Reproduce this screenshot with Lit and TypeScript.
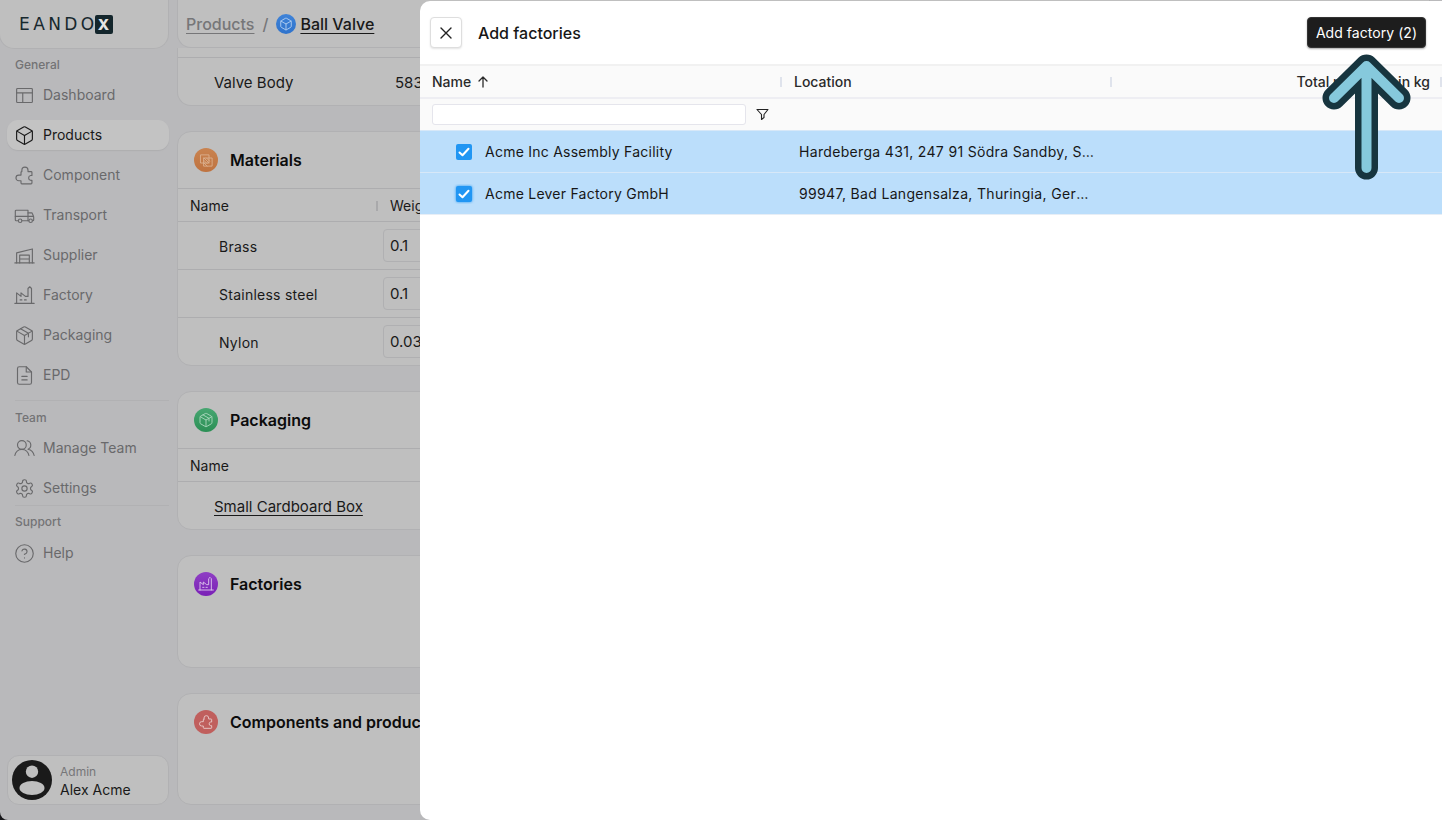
import { LitElement, css, html, svg } from 'lit';
import { customElement } from 'lit/decorators.js';

const box = svg`<path d="M21 8a2 2 0 0 0-1-1.73l-7-4a2 2 0 0 0-2 0l-7 4A2 2 0 0 0 3 8v8a2 2 0 0 0 1 1.73l7 4a2 2 0 0 0 2 0l7-4A2 2 0 0 0 21 16Z"/><path d="m3.3 7 8.7 5 8.7-5"/><path d="M12 22V12"/>`;
const puzzle = svg`<path d="M9 7.5V6a3.5 3.5 0 1 1 7 0v1.5h3.5a1 1 0 0 1 1 1V12H19a2.8 2.8 0 0 0 0 5.5h1.5v3a1 1 0 0 1-1 1H9a1 1 0 0 1-1-1V18H5.5a3.2 3.2 0 0 1 0-6.5H8v-3a1 1 0 0 1 1-1Z"/>`;
const factory = svg`<path d="M1 21h22"/><path d="M3 21V9l5 4V9l5 4h3V4l2-2 2 2v17"/><path d="M7 17h2M12 17h2"/>`;
const packaging = svg`${box}<path d="m7.5 4.3 9 5.2v4"/>`;

const icons = {
  dashboard: svg`<rect x="3" y="4" width="18" height="16" rx="1"/><path d="M3 9h18M10 9v11"/>`,
  box,
  puzzle,
  truck: svg`<path d="M5 18H2.5a1 1 0 0 1-1-1V7a1 1 0 0 1 1-1H16v12H9"/><path d="M16 9h4a1 1 0 0 1 1 .7l1.5 4V17a1 1 0 0 1-1 1H21"/><path d="M16 18h1M1.5 13H22"/><circle cx="7" cy="18" r="2"/><circle cx="19" cy="18" r="2"/>`,
  supplier: svg`<path d="M1 20.5h22"/><path d="M3 20.5V9L21 4.5v16"/><path d="M6.5 20.5v-9h11v9M6.5 16h11"/>`,
  factory,
  packaging,
  file: svg`<path d="M14 2H6a2 2 0 0 0-2 2v16a2 2 0 0 0 2 2h12a2 2 0 0 0 2-2V8Z"/><path d="M14 2v6h6"/><path d="M9 13h6M9 17h6"/>`,
  users: svg`<circle cx="9" cy="8" r="5"/><path d="M1 20c.6-4 3.8-7 8-7s7.4 3 8 7"/><path d="M15 3.2a5 5 0 0 1 1 9.6c3.6.7 6.3 3.5 7 7.2"/>`,
  gear: svg`<path d="M12.22 2h-.44a2 2 0 0 0-2 2v.18a2 2 0 0 1-1 1.73l-.43.25a2 2 0 0 1-2 0l-.15-.08a2 2 0 0 0-2.73.73l-.22.38a2 2 0 0 0 .73 2.73l.15.1a2 2 0 0 1 1 1.72v.51a2 2 0 0 1-1 1.74l-.15.09a2 2 0 0 0-.73 2.73l.22.38a2 2 0 0 0 2.73.73l.15-.08a2 2 0 0 1 2 0l.43.25a2 2 0 0 1 1 1.73V20a2 2 0 0 0 2 2h.44a2 2 0 0 0 2-2v-.18a2 2 0 0 1 1-1.73l.43-.25a2 2 0 0 1 2 0l.15.08a2 2 0 0 0 2.73-.73l.22-.39a2 2 0 0 0-.73-2.73l-.15-.08a2 2 0 0 1-1-1.74v-.5a2 2 0 0 1 1-1.74l.15-.09a2 2 0 0 0 .73-2.73l-.22-.38a2 2 0 0 0-2.73-.73l-.15.08a2 2 0 0 1-2 0l-.43-.25a2 2 0 0 1-1-1.73V4a2 2 0 0 0-2-2z"/><circle cx="12" cy="12" r="3"/>`,
  help: svg`<circle cx="12" cy="12" r="10"/><path d="M9.09 9a3 3 0 0 1 5.83 1c0 2-3 3-3 3"/><path d="M12 17h.01"/>`,
  hatch: svg`<rect x="3" y="3" width="13" height="13"/><rect x="8" y="8" width="13" height="13"/><path d="m8 8 8 8M8 12l5 5M12 8l5 5M13 21l-5-5"/>`,
};

type IconName = keyof typeof icons;

const icon = (name: IconName, size = 21, width = 1.3) => html`<svg
  width=${size}
  height=${size}
  viewBox="0 0 24 24"
  fill="none"
  stroke="currentColor"
  stroke-width=${width}
  stroke-linecap="round"
  stroke-linejoin="round"
>
  ${icons[name]}
</svg>`;

const general: [IconName, string][] = [
  ['dashboard', 'Dashboard'],
  ['box', 'Products'],
  ['puzzle', 'Component'],
  ['truck', 'Transport'],
  ['supplier', 'Supplier'],
  ['factory', 'Factory'],
  ['packaging', 'Packaging'],
  ['file', 'EPD'],
];

const materials = [
  ['Brass', '0.1'],
  ['Stainless steel', '0.1'],
  ['Nylon', '0.03'],
];

const factories = [
  ['Acme Inc Assembly Facility', 'Hardeberga 431, 247 91 Södra Sandby, Sweden'],
  ['Acme Lever Factory GmbH', '99947, Bad Langensalza, Thuringia, Germany'],
];

@customElement('app-root')
export class AppRoot extends LitElement {
  static styles = css`
    :host {
      background: #17171a;
      display: block;
      font: 400 14px/20px 'Inter', 'Liberation Sans', sans-serif;
      height: 820px;
      overflow: hidden;
      position: relative;
      width: 1442px;
      --line: #adadaf;
      --card-line: #b1b1b3;
      --muted: #69696b;
      --ink: #191919;
    }

    * {
      box-sizing: border-box;
    }

    .page {
      background: #b9b9bb;
      border-radius: 0 0 8px 8px;
      display: grid;
      grid-template-columns: 177px 1fr;
      height: 820px;
      overflow: hidden;
    }

    .sidebar {
      display: flex;
      flex-direction: column;
      height: 820px;
      padding-bottom: 15px;
    }

    .logo {
      align-items: center;
      background: #bfbfbf;
      border: 1px solid var(--card-line);
      border-radius: 0 0 15px 15px;
      border-top: 0;
      color: #17282e;
      display: flex;
      flex: none;
      font: 400 17px/20px 'DejaVu Sans', sans-serif;
      height: 49px;
      letter-spacing: 3.4px;
      margin: 0 8px 7px -1px;
      padding-left: 19px;
    }

    .logo b {
      background: #14262c;
      border-radius: 2px;
      color: #e4e4e4;
      font: 800 15px/19px 'Inter', sans-serif;
      height: 19px;
      letter-spacing: 0;
      margin-left: -3px;
      text-align: center;
      width: 18px;
    }

    .label {
      color: #737375;
      flex: none;
      font-size: 12px;
      font-weight: 500;
      height: 16px;
      line-height: 18px;
      margin-left: 15px;
    }

    nav {
      display: flex;
      flex: none;
      flex-direction: column;
      gap: 10px;
      margin: 8px 8px 0 7px;
    }

    nav.help {
      margin-top: 9px;
    }

    nav a {
      align-items: center;
      border-radius: 11px;
      color: var(--muted);
      display: flex;
      gap: 8px;
      height: 30px;
      padding-left: 7px;
    }

    nav a svg {
      flex: none;
    }

    nav a.active {
      background: #c3c3c3;
      box-shadow: 0 1px 1px #aeaeb0;
      color: var(--ink);
    }

    hr {
      border: 0;
      border-top: 1px solid var(--card-line);
      flex: none;
      margin: 0 8px 0 15px;
    }

    .user {
      align-items: center;
      background: #bfbfbf;
      border: 1px solid var(--card-line);
      border-radius: 12px;
      display: flex;
      flex: none;
      gap: 8px;
      height: 50px;
      margin: auto 8px 0 7px;
      padding-left: 4px;
    }

    .user div {
      display: flex;
      flex-direction: column;
      padding-top: 3px;
    }

    .user small {
      color: #767678;
      font-size: 12px;
      line-height: 16px;
    }

    .user span {
      color: var(--ink);
      line-height: 19px;
    }

    .content {
      display: flex;
      flex-direction: column;
      gap: 25px;
      height: 820px;
      overflow: hidden;
      padding-right: 12px;
    }

    .card {
      background: #bfbfbf;
      border: 1px solid var(--card-line);
      border-radius: 14px;
      color: var(--ink);
      flex: none;
    }

    .crumbs {
      align-items: center;
      border-radius: 0 0 14px 14px;
      border-top: 0;
      display: flex;
      font-size: 16px;
      font-weight: 500;
      height: 48px;
      padding-left: 8px;
    }

    .crumbs u {
      text-underline-offset: 3px;
    }

    .crumbs .parent {
      color: #767678;
    }

    .crumbs i {
      color: #767678;
      font-style: normal;
      margin: 0 8px;
    }

    .crumbs .dot {
      align-items: center;
      background: linear-gradient(#3f83d8, #2f73cc);
      border-radius: 50%;
      color: #b9d3f2;
      display: flex;
      height: 20px;
      justify-content: center;
      margin-right: 4px;
      width: 20px;
    }

    .stack {
      display: flex;
      flex: none;
      flex-direction: column;
    }

    .stub {
      border-radius: 0 0 14px 14px;
      border-top: 0;
      height: 58px;
      padding-top: 9px;
    }

    .stub .row {
      border-top: 1px solid var(--line);
      font-size: 15px;
      height: 48px;
      padding-top: 3px;
    }

    .stub .row span:first-child {
      margin-left: 36px;
      width: 181px;
    }

    .head {
      align-items: center;
      color: #0c0c0c;
      display: flex;
      font-size: 16px;
      font-weight: 600;
      gap: 12px;
      height: 56px;
      padding-left: 16px;
      white-space: nowrap;
    }

    .disc {
      align-items: center;
      border-radius: 50%;
      color: #dbdbdb;
      display: flex;
      flex: none;
      height: 24px;
      justify-content: center;
      width: 24px;
    }

    .orange {
      background: linear-gradient(#c98350, #bf7340);
      color: #dcb190;
    }

    .green {
      background: linear-gradient(#47a671, #2b8f55);
      color: #a9d6bb;
    }

    .purple {
      background: linear-gradient(#8f3fc4, #7a20b6);
      color: #dcc5ec;
    }

    .red {
      background: #c05f5d;
      color: #e7c9c8;
    }

    .th {
      align-items: center;
      border-top: 1px solid var(--line);
      display: flex;
      height: 33px;
      padding: 1px 0 0 12px;
    }

    .th span:first-child {
      border-right: 2px solid #a9a9ab;
      line-height: 10px;
      margin-right: 12px;
      width: 188px;
    }

    .th.single span:first-child {
      border: 0;
    }

    .row {
      align-items: center;
      border-top: 1px solid var(--line);
      display: flex;
      height: 48px;
      padding-top: 2px;
    }

    .row .name {
      letter-spacing: 0.25px;
      margin-left: 41px;
      width: 164px;
    }

    .value {
      background: #bfbfbf;
      border: 1px solid #b0b0b2;
      border-radius: 4px;
      font-size: 15px;
      height: 33px;
      line-height: 31px;
      margin-top: -2px;
      padding-left: 6px;
      width: 120px;
    }

    .plain {
      padding-top: 3px;
    }

    .plain span {
      font-size: 15px;
      margin-left: 36px;
      text-decoration: underline;
      text-underline-offset: 3px;
    }

    .modal {
      background: #fff;
      border-radius: 10px 0 0 10px;
      bottom: 0;
      color: #171717;
      left: 420px;
      position: absolute;
      right: 0;
      top: 1px;
    }

    .bar {
      align-items: center;
      display: flex;
      height: 63px;
      padding: 0 16px 0 10px;
    }

    .bar h2 {
      font-size: 16px;
      font-weight: 500;
      margin: 0 auto 0 16px;
    }

    .close {
      align-items: center;
      background: #fff;
      border: 1px solid #dedede;
      border-radius: 4px;
      box-shadow: 0 1px 2px #0000001c;
      color: #222;
      display: flex;
      height: 31px;
      justify-content: center;
      padding: 0;
      width: 32px;
    }

    .primary {
      background: #1d1d1d;
      border: 1px solid #333;
      border-radius: 4px;
      box-shadow: 0 1px 2px #00000055;
      color: #fff;
      font: 400 14px/20px 'Inter', sans-serif;
      height: 31px;
      letter-spacing: 0.05px;
      padding: 0;
      width: 119px;
    }

    .cols {
      display: grid;
      grid-template-columns: 362px 330px 1fr;
    }

    .titles {
      background: #fafafa;
      border-bottom: 2px solid #eeeef3;
      border-top: 2px solid #f1f1f1;
      color: #2a2a2a;
      font-weight: 500;
      height: 35px;
    }

    .titles div {
      align-items: center;
      display: flex;
      gap: 5px;
      padding-left: 12px;
      position: relative;
    }

    .titles div::after {
      background: #dfe3ec;
      content: '';
      height: 10px;
      position: absolute;
      right: 0;
      width: 2px;
    }

    .titles div:last-child {
      justify-content: flex-end;
      padding-right: 12px;
    }

    .filters {
      align-items: center;
      background: #fafafa;
      display: flex;
      height: 31px;
      padding-left: 12px;
    }

    .filters span {
      background: #fff;
      border: 1px solid #e5e5ec;
      border-radius: 3px;
      height: 21px;
      margin-right: 10px;
      width: 314px;
    }

    .sel {
      align-items: center;
      background: #bbdefb;
      border-top: 1px solid #d7e8f8;
      height: 42px;
    }

    .sel:last-child {
      box-shadow: 0 1px #e7eef6;
    }

    .sel > div {
      overflow: hidden;
      text-overflow: ellipsis;
      white-space: nowrap;
    }

    .sel .first {
      align-items: center;
      display: flex;
      gap: 13px;
      letter-spacing: 0.24px;
      padding-left: 36px;
    }

    .sel .loc {
      letter-spacing: 0.33px;
      padding: 0 18px 0 17px;
    }

    .tick {
      align-items: center;
      background: #2196f3;
      border-radius: 2px;
      display: flex;
      flex: none;
      height: 16px;
      justify-content: center;
      width: 16px;
    }

    .sel.focus .tick {
      box-shadow: 0 0 3px #2196f3;
    }

    .pointer {
      left: 1310px;
      position: absolute;
      top: 48px;
    }
  `;

  render() {
    return html`
      <div class="page">
        <aside class="sidebar">
          <div class="logo">EANDO<b>X</b></div>
          <div class="label">General</div>
          <nav>
            ${general.map(
              ([name, text]) =>
                html`<a class=${text === 'Products' ? 'active' : ''}>${icon(name)}${text}</a>`,
            )}
          </nav>
          <hr style="margin-top:10px" />
          <div class="label" style="margin-top:8px">Team</div>
          <nav>
            <a>${icon('users')}Manage Team</a>
            <a>${icon('gear')}Settings</a>
          </nav>
          <hr style="margin-top:2px" />
          <div class="label" style="margin-top:7px">Support</div>
          <nav class="help"><a>${icon('help')}Help</a></nav>
          <div class="user">
            <svg width="40" height="40" viewBox="0 0 40 40">
              <circle cx="20" cy="20" r="20" fill="#1a1a1a" />
              <circle cx="20" cy="11.7" r="6.2" fill="#bfbfbf" />
              <ellipse cx="20" cy="28" rx="12.5" ry="7" fill="#bfbfbf" />
            </svg>
            <div>
              <small>Admin</small>
              <span>Alex Acme</span>
            </div>
          </div>
        </aside>
        <main class="content">
          <div class="stack">
            <div class="card crumbs">
              <u class="parent">Products</u><i>/</i>
              <span class="dot">${icon('box', 14, 1.5)}</span>
              <u>Ball Valve</u>
            </div>
            <div class="card stub">
              <div class="row"><span>Valve Body</span><span>583</span></div>
            </div>
          </div>
          <section class="card">
            <div class="head"><span class="disc orange">${icon('hatch', 15, 1.4)}</span>Materials</div>
            <div class="th"><span>Name</span><span>Weight</span></div>
            ${materials.map(
              ([name, weight]) =>
                html`<div class="row">
                  <span class="name">${name}</span><span class="value">${weight}</span>
                </div>`,
            )}
          </section>
          <section class="card">
            <div class="head"><span class="disc green">${icon('packaging', 16, 1.4)}</span>Packaging</div>
            <div class="th single"><span>Name</span></div>
            <div class="row plain"><span>Small Cardboard Box</span></div>
          </section>
          <section class="card" style="height:113px">
            <div class="head"><span class="disc purple">${icon('factory', 16, 1.4)}</span>Factories</div>
          </section>
          <section class="card" style="height:112px">
            <div class="head"><span class="disc red">${icon('puzzle', 16, 1.4)}</span>Components and products</div>
          </section>
        </main>
      </div>

      <div class="modal">
        <div class="bar">
          <button class="close">
            <svg width="12" height="12" viewBox="0 0 12 12" fill="none" stroke="currentColor" stroke-width="1.4" stroke-linecap="round">
              <path d="m1 1 10 10M11 1 1 11" />
            </svg>
          </button>
          <h2>Add factories</h2>
          <button class="primary">Add factory (2)</button>
        </div>
        <div class="cols titles">
          <div>
            Name
            <svg width="14" height="14" viewBox="0 0 14 14" fill="none" stroke="currentColor" stroke-width="1.3" stroke-linecap="round" stroke-linejoin="round">
              <path d="M7 12V2M3 6l4-4 4 4" />
            </svg>
          </div>
          <div>Location</div>
          <div>Total materials in kg</div>
        </div>
        <div class="filters">
          <span></span>
          <svg width="13" height="13" viewBox="0 0 13 13" fill="none" stroke="#222" stroke-width="1.1" stroke-linejoin="round">
            <path d="M1 1.5h11L8 6.5v3l-2.5 2v-5Z" />
          </svg>
        </div>
        ${factories.map(
          ([name, location], i) =>
            html`<div class="cols sel ${i === 1 ? 'focus' : ''}">
              <div class="first">
                <span class="tick">
                  <svg width="12" height="12" viewBox="0 0 12 12" fill="none" stroke="#fff" stroke-width="2" stroke-linecap="round" stroke-linejoin="round">
                    <path d="m1.5 6.5 3 2.8 6-6.5" />
                  </svg>
                </span>
                ${name}
              </div>
              <div class="loc">${location}</div>
              <div></div>
            </div>`,
        )}
      </div>

      <svg class="pointer" width="116" height="136" viewBox="0 0 116 136" fill="none" stroke-linecap="round" stroke-linejoin="round">
        <path stroke="#17353f" stroke-width="23" d="M56.5 120V18M24 50 56.5 18 89 50" />
        <path stroke="#86c9dc" stroke-width="10" d="M56.5 120V18M24 50 56.5 18 89 50" />
      </svg>
    `;
  }
}

declare global {
  interface HTMLElementTagNameMap {
    'app-root': AppRoot;
  }
}
